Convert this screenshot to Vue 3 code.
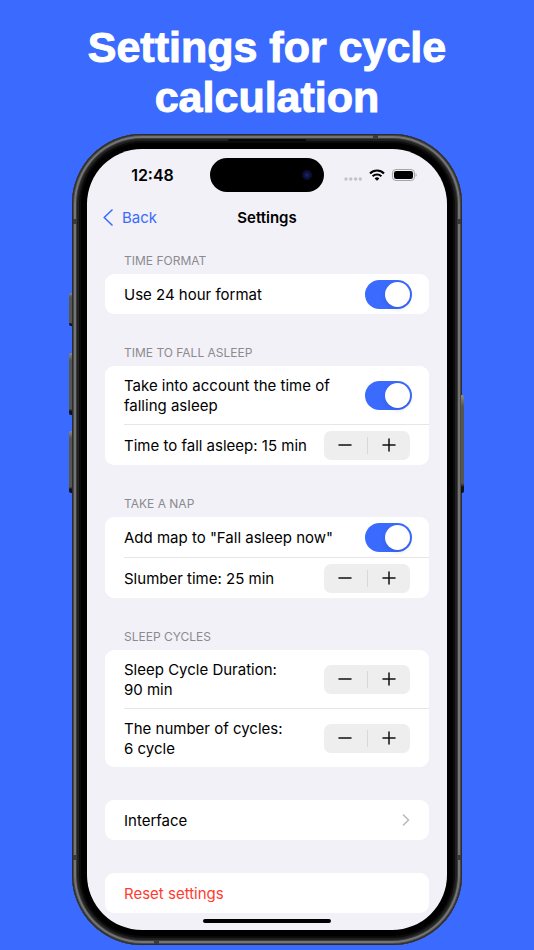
<template>
  <main class="promo">
    <h1 class="promo-title">Settings for cycle calculation</h1>

    <div class="phone">
      <span class="side-key key-action"></span>
      <span class="side-key key-up"></span>
      <span class="side-key key-down"></span>
      <span class="side-key key-power"></span>
      <span class="band band-top"></span>
      <span class="band band-bottom"></span>
      <span class="band band-left-high"></span>
      <span class="band band-left-low"></span>
      <span class="band band-right-high"></span>
      <span class="band band-right-low"></span>
      <span class="speaker"></span>

      <div class="screen">
        <div class="status-bar">
          <span class="clock">12:48</span>
          <span class="island"><span class="camera"></span></span>
          <span class="status-icons">
            <svg width="18" height="4" viewBox="0 0 18 4" fill="#c3c3c7">
              <circle cx="2" cy="2" r="1.7" />
              <circle cx="6.8" cy="2" r="1.7" />
              <circle cx="11.6" cy="2" r="1.7" />
              <circle cx="16.3" cy="2" r="1.7" />
            </svg>
            <svg width="16" height="12" viewBox="0 0 16 12" fill="none" stroke="#000" stroke-width="2.1">
              <path d="M1 4.4a10 10 0 0 1 14 0" />
              <path d="M3.6 7.3a6.3 6.3 0 0 1 8.8 0" />
              <path d="M8 11.8 5.6 9.4a3.4 3.4 0 0 1 4.8 0z" fill="#000" stroke="none" />
            </svg>
            <svg width="25" height="12" viewBox="0 0 25 12">
              <rect x="0.5" y="0.5" width="22" height="11" rx="3.4" fill="none" stroke="#a5a5a9" />
              <rect x="2" y="2" width="19" height="8" rx="2.2" fill="#000" />
              <path d="M23.6 4.2c1.4.5 1.4 3.1 0 3.6z" fill="#a5a5a9" />
            </svg>
          </span>
        </div>

        <nav class="nav-bar">
          <a href="#" class="back" @click.prevent>
            <svg width="10" height="17" viewBox="0 0 10 17" fill="none" stroke="currentColor" stroke-width="1.6" stroke-linecap="round" stroke-linejoin="round">
              <path d="M9 1 1.2 8.5 9 16" />
            </svg>
            Back
          </a>
          <h2 class="nav-title">Settings</h2>
        </nav>

        <section v-for="section in sections" :key="section.title" class="group">
          <h3 class="group-title">{{ section.title }}</h3>
          <div class="card">
            <div v-for="row in section.rows" :key="row.id" class="row" :class="{ 'row-toggle': row.type === 'toggle' }">
              <template v-if="row.type === 'toggle'">
                <label class="row-text" :for="row.id">{{ row.label }}</label>
                <input :id="row.id" v-model="row.on" type="checkbox" class="toggle" />
              </template>
              <template v-else>
                <span :id="row.id" class="row-text">{{ row.label }}{{ row.value }} {{ row.unit }}</span>
                <div class="stepper" role="group" :aria-labelledby="row.id">
                  <button type="button" aria-label="Decrease" @click="change(row, -1)">
                    <svg width="14" height="14" viewBox="0 0 14 14" stroke="#111" stroke-width="1.5" stroke-linecap="round">
                      <path d="M1 7h12" />
                    </svg>
                  </button>
                  <span class="stepper-line"></span>
                  <button type="button" aria-label="Increase" @click="change(row, 1)">
                    <svg width="14" height="14" viewBox="0 0 14 14" stroke="#111" stroke-width="1.5" stroke-linecap="round">
                      <path d="M1 7h12M7 1v12" />
                    </svg>
                  </button>
                </div>
              </template>
            </div>
          </div>
        </section>

        <a href="#" class="card card-link" @click.prevent>
          <span class="row">
            <span class="row-text">Interface</span>
            <svg width="8" height="12" viewBox="0 0 8 12" fill="none" stroke="#bcbcc0" stroke-width="1.7" stroke-linecap="round" stroke-linejoin="round">
              <path d="M1.5 1 6.5 6l-5 5" />
            </svg>
          </span>
        </a>

        <button type="button" class="card card-link reset" @click="reset">
          <span class="row">
            <span class="row-text">Reset settings</span>
          </span>
        </button>

        <div class="home-indicator"></div>
      </div>
    </div>
  </main>
</template>

<script setup>
import { ref } from 'vue';

const defaults = () => [
  {
    title: 'TIME FORMAT',
    rows: [{ id: 'format', type: 'toggle', label: 'Use 24 hour format', on: true }]
  },
  {
    title: 'TIME TO FALL ASLEEP',
    rows: [
      { id: 'account', type: 'toggle', label: 'Take into account the time of falling asleep', on: true },
      { id: 'asleep', type: 'stepper', label: 'Time to fall asleep: ', value: 15, unit: 'min', step: 1 }
    ]
  },
  {
    title: 'TAKE A NAP',
    rows: [
      { id: 'nap', type: 'toggle', label: 'Add map to "Fall asleep now"', on: true },
      { id: 'slumber', type: 'stepper', label: 'Slumber time: ', value: 25, unit: 'min', step: 1 }
    ]
  },
  {
    title: 'SLEEP CYCLES',
    rows: [
      { id: 'duration', type: 'stepper', label: 'Sleep Cycle Duration:\n', value: 90, unit: 'min', step: 5 },
      { id: 'cycles', type: 'stepper', label: 'The number of cycles:\n', value: 6, unit: 'cycle', step: 1 }
    ]
  }
];

const sections = ref(defaults());

const change = (row, direction) => {
  row.value = Math.max(row.step, row.value + direction * row.step);
};

const reset = () => {
  sections.value = defaults();
};
</script>

<style>
body {
  margin: 0;
  background: #3a6bfe;
}
</style>

<style scoped>
.promo {
  box-sizing: border-box;
  min-height: 100vh;
  padding: 22px 72px 6px;
  background: #3a6bfe;
  font-family: Inter, "Liberation Sans", sans-serif;
  color: #000;
}

.promo-title {
  margin: 0 0 12px;
  color: #fff;
  font-family: "Arial Rounded MT Bold", "Liberation Sans", sans-serif;
  font-size: 43px;
  font-weight: bold;
  line-height: 50px;
  text-align: center;
  -webkit-text-stroke: 1px #fff;
  stroke-linejoin: round;
}

/* phone body */
.phone {
  position: relative;
  padding: 15px;
  border-radius: 70px;
  background: #000;
  box-shadow:
    inset 0 0 0 1px #2b2c2e,
    inset 0 0 0 2px #48494a,
    inset 0 0 0 4px #747474,
    inset 0 0 0 5px #3b3b3b,
    inset 0 0 0 7px #202020,
    inset 0 0 0 9px #0b0b0b;
}

.side-key {
  position: absolute;
  left: -3px;
  width: 3px;
  border-radius: 2px 0 0 2px;
  background: linear-gradient(#8a8a84, #55564f 12%, #55564f 90%, #111 94%);
}

.key-action {
  top: 159px;
  height: 33px;
}

.key-up {
  top: 219px;
  height: 62px;
}

.key-down {
  top: 297px;
  height: 62px;
}

.key-power {
  top: 261px;
  right: -2px;
  left: auto;
  height: 98px;
  border-radius: 0 2px 2px 0;
}

.band {
  position: absolute;
  width: 5px;
  height: 5px;
  background: #3a3a3a;
}

.band-top {
  top: 1px;
  right: 84px;
  height: 3px;
}

.band-bottom {
  bottom: 1px;
  left: 82px;
  height: 3px;
}

.band-left-high,
.band-left-low {
  left: 1px;
  width: 4px;
}

.band-right-high,
.band-right-low {
  right: 1px;
  width: 4px;
}

.band-left-high,
.band-right-high {
  top: 85px;
}

.band-left-low,
.band-right-low {
  bottom: 85px;
}

.speaker {
  position: absolute;
  top: 5px;
  left: 50%;
  width: 78px;
  height: 2px;
  margin-left: -39px;
  border-radius: 1px;
  background: #050505;
}

.screen {
  overflow: hidden;
  border-radius: 55px;
  background: #f2f1f7;
}

/* status bar */
.status-bar {
  display: grid;
  grid-template-columns: 1fr auto 1fr;
  align-items: center;
  height: 52px;
}

.clock {
  padding-left: 8px;
  font-size: 16px;
  font-weight: 600;
  text-align: center;
}

.island {
  display: flex;
  align-items: center;
  justify-content: flex-end;
  box-sizing: border-box;
  width: 114px;
  height: 34px;
  padding-right: 12px;
  border-radius: 17px;
  background: #000;
}

.camera {
  width: 10px;
  height: 10px;
  border-radius: 50%;
  background: radial-gradient(#1c2467, #0b0e38 50%, #08071a);
}

.status-icons {
  display: flex;
  align-items: center;
  justify-content: flex-end;
  gap: 7px;
  padding-right: 30px;
}

.status-icons svg:first-child {
  margin-top: 8px;
}

/* navigation */
.nav-bar {
  display: grid;
  grid-template-columns: 1fr auto 1fr;
  align-items: center;
  height: 32px;
  margin-bottom: 20px;
  padding: 0 16px;
}

.back {
  display: flex;
  align-items: center;
  gap: 9px;
  color: #3a6bfe;
  font-size: 15px;
  text-decoration: none;
}

.nav-title {
  margin: 0;
  font-size: 15px;
  font-weight: 600;
}

/* settings list */
.group {
  margin-bottom: 31px;
}

.group-title {
  margin: 0 37px 5px;
  color: #8a8a8f;
  font-size: 12px;
  font-weight: 400;
  line-height: 16px;
}

.card {
  margin: 0 18px;
  border-radius: 9px;
  background: #fff;
}

.row {
  display: flex;
  align-items: center;
  justify-content: space-between;
  min-height: 30px;
  margin-left: 19px;
  padding: 5px 19px 5px 0;
}

.row + .row {
  border-top: 1px solid #e6e6e8;
}

.row-toggle {
  padding-right: 17px;
}

.row-text {
  padding: 5px 0 3px;
  font-size: 15px;
  line-height: 20px;
  white-space: pre-line;
}

.toggle {
  flex-shrink: 0;
  display: flex;
  align-items: center;
  width: 47px;
  height: 29px;
  margin: 0;
  padding: 2px;
  box-sizing: border-box;
  appearance: none;
  border-radius: 15px;
  background: #e5e5ea;
  cursor: pointer;
}

.toggle::before {
  content: "";
  width: 25px;
  height: 25px;
  border-radius: 50%;
  background: #fff;
  box-shadow: 0 2px 5px rgba(0, 0, 0, 0.12);
}

.toggle:checked {
  justify-content: flex-end;
  background: #3a6bfe;
}

.stepper {
  flex-shrink: 0;
  display: flex;
  align-items: center;
  width: 86px;
  height: 29px;
  border-radius: 7px;
  background: #eeeeef;
}

.stepper button {
  flex: 1;
  display: flex;
  align-items: center;
  justify-content: center;
  height: 100%;
  padding: 0;
  border: none;
  background: none;
  cursor: pointer;
}

.stepper-line {
  width: 1px;
  height: 17px;
  background: #d8d8da;
}

.card-link {
  display: block;
  margin-top: 33px;
  color: #000;
  text-decoration: none;
}

.reset {
  width: calc(100% - 36px);
  padding: 0;
  border: none;
  color: #ff3b30;
  font-family: inherit;
  text-align: left;
  cursor: pointer;
}

.home-indicator {
  width: 128px;
  height: 4px;
  margin: 6px auto 7px;
  border-radius: 2px;
  background: #000;
}
</style>
